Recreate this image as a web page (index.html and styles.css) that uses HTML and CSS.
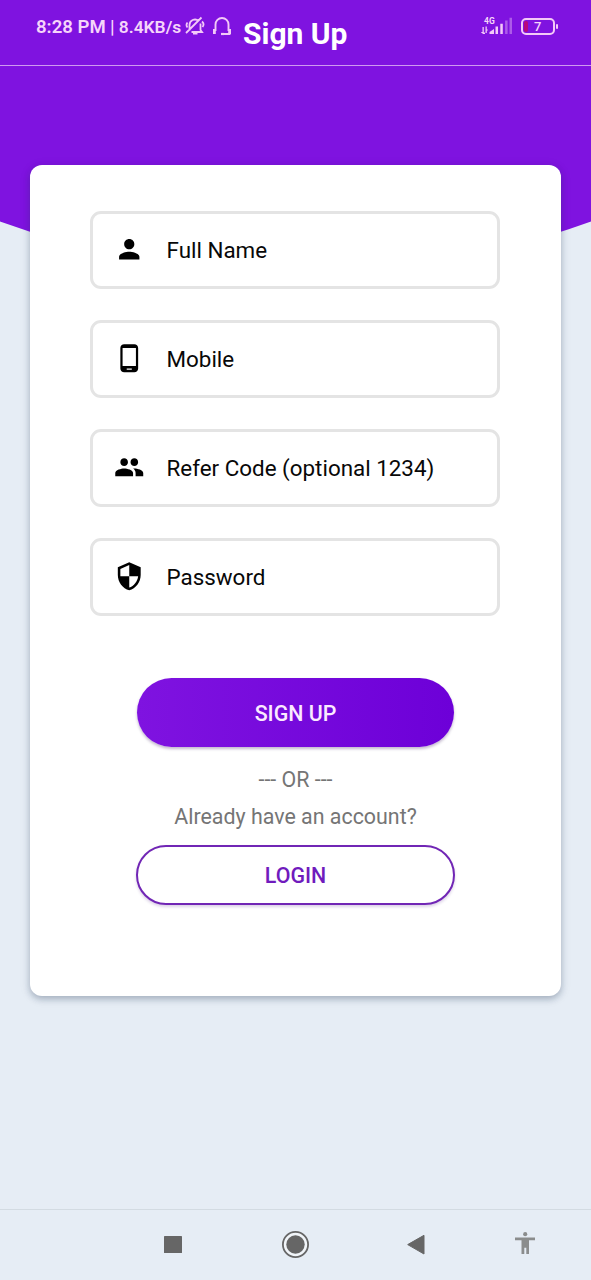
FILE: index.html
```html
<!DOCTYPE html>
<html lang="en">
<head>
<meta charset="utf-8">
<title>Sign Up</title>
<link rel="stylesheet" href="styles.css">
</head>
<body>
<div class="screen">
  <svg class="hero" viewBox="0 0 591 280" aria-hidden="true"><path d="M0 0H591V221.500Q295.500 328 0 221.500Z" fill="#7f13e0"/></svg>
  <header class="bar">
    <div class="time"><span>8:28 PM</span><span class="sep">|</span><span class="speed">8.4KB/s</span></div>
    <svg class="bell" viewBox="0 0 20 20" fill="none" stroke="#f3c9f7" stroke-width="1.800">
      <path d="M4.500 14.500V9a5.500 5.500 0 0 1 9-4.200M15.500 7.500V14l1.500 2H6.500M2.500 6.500Q.5 9 2.500 11.500M17 5.500Q19.800 8 17.500 11M1 17 16.500 1.500"/><path d="M8 17.500h4.500" stroke-width="2"/>
    </svg>
    <svg class="headset" viewBox="0 0 20 20" fill="none" stroke="#f3c9f7" stroke-width="1.900">
      <path d="M3.500 14V7.500a6.500 6.500 0 0 1 13 0V14M17.500 15.500V17H11"/><path d="M2.400 12v5M17.600 12v5" stroke-width="2.800"/><path d="M9 17h3" stroke-width="2.200"/>
    </svg>
    <h1 class="title">Sign Up</h1>
    <div class="signal">
      <span class="net">4G</span>
      <svg class="bars" viewBox="0 0 31 18" fill="#f3c9f7"><path d="M1.500 10h1.300v5.500H4V17H1.500zM.3 15h2v1H.3zM4.500 9.500h1.300v3h1v1h-1V16H4.500zM8.500 17v-2l4.500-3v5zM14.500 9.500H17V17h-2.500zM19.300 6.800h2.500V17h-2.500z"/><path d="M24.100 3.500h2.500V17h-2.500zM28.500 .8H31V17h-2.500z" opacity=".4"/></svg>
    </div>
    <div class="battery"><span class="level"></span>7</div>
    <span class="nub"></span>
  </header>
  <main class="card">
    <div class="fields">
      <label class="field"><svg class="icon" viewBox="0 0 24 24"><path d="M12 12c2.210 0 4-1.790 4-4s-1.790-4-4-4-4 1.790-4 4 1.790 4 4 4zm0 2c-2.670 0-8 1.340-8 4v2h16v-2c0-2.660-5.330-4-8-4z"/></svg><span>Full Name</span></label>
      <label class="field"><svg class="icon" viewBox="0 0 24 24"><path d="M16 1H8C6.340 1 5 2.340 5 4v16c0 1.660 1.340 3 3 3h8c1.660 0 3-1.340 3-3V4c0-1.660-1.340-3-3-3zm-2 20h-4v-1h4v1zm3.250-3H6.750V4h10.500v14z"/></svg><span>Mobile</span></label>
      <label class="field"><svg class="icon" viewBox="0 0 24 24"><path d="M16 11c1.660 0 2.990-1.340 2.990-3S17.660 5 16 5c-1.660 0-3 1.340-3 3s1.340 3 3 3zm-8 0c1.660 0 2.990-1.340 2.990-3S9.660 5 8 5C6.340 5 5 6.340 5 8s1.340 3 3 3zm0 2c-2.330 0-7 1.170-7 3.500V19h14v-2.500c0-2.330-4.670-3.500-7-3.500zm8 0c-.29 0-.62.02-.97.05 1.160.84 1.970 1.970 1.970 3.450V19h6v-2.500c0-2.330-4.670-3.500-7-3.500z"/></svg><span>Refer Code (optional 1234)</span></label>
      <label class="field"><svg class="icon" viewBox="0 0 24 24"><path d="M12 1 3 5v6c0 5.550 3.840 10.740 9 12 5.160-1.260 9-6.450 9-12V5l-9-4zm0 10.990h7c-.53 4.120-3.280 7.790-7 8.940V12H5V6.300l7-3.110v8.800z"/></svg><span>Password</span></label>
    </div>
    <button class="btn signup">SIGN UP</button>
    <p class="or">--- OR ---</p>
    <p class="have">Already have an account?</p>
    <button class="btn login">LOGIN</button>
  </main>
  <nav class="nav">
    <svg class="navicons" viewBox="0 0 591 70" fill="#666">
      <rect x="164" y="26" width="18" height="17" rx=".6"/>
      <circle cx="295.500" cy="34.500" r="12.600" fill="#f1f5f9" stroke="#666" stroke-width="1.800"/><circle cx="295.500" cy="34.500" r="9.200"/>
      <path d="M407.700 34.600 424 25.300V44z" stroke="#666" stroke-linejoin="round"/>
      <g fill="#8b8d8d"><circle cx="525.200" cy="24.200" r="2.100"/><path d="M515 27.500h20v2.700h-6V44h-2.700v-6.300h-2V44h-2.800V30.200H515z"/></g>
    </svg>
  </nav>
</div>
</body>
</html>
```

FILE: styles.css
```css
* { box-sizing: border-box; }
body { margin: 0; font-family: Roboto, "Liberation Sans", sans-serif; }
h1, p { margin: 0; }
.screen { position: relative; isolation: isolate; display: flex; flex-direction: column; width: 591px; height: 1280px; background: #e6edf5; overflow: hidden; }
.hero { position: absolute; z-index: -1; top: 0; left: 0; width: 591px; height: 280px; }
.bar { display: flex; align-items: flex-start; height: 66px; padding-left: 36px; border-bottom: 1px solid #cf9af0; color: #f6d5fa; }
.time { display: flex; width: 149px; margin-top: 16px; font-size: 18.6px; line-height: 22px; font-weight: 600; white-space: nowrap; }
.sep { width: 13px; text-align: center; font-weight: 500; }
.speed { font-size: 17.4px; }
.bell { width: 20px; height: 20px; margin-top: 16px; }
.headset { width: 20px; height: 20px; margin: 17px 0 0 7px; }
.title { width: 237px; margin: 16px 0 0 11px; font-size: 30px; line-height: 36px; font-weight: 700; color: #fff; white-space: nowrap; }
.signal { display: grid; width: 31px; height: 18px; margin: 17px 9px 0 1px; }
.net, .bars { grid-area: 1 / 1; }
.net { padding-left: 3px; font-size: 8.5px; line-height: 8px; font-weight: 700; }
.bars { width: 31px; height: 18px; }
.battery { display: flex; align-items: center; width: 34px; height: 17px; margin-top: 18px; padding-left: 1px; border: 2px solid #f3c9f7; border-radius: 5px; font-size: 13px; line-height: 13px; font-weight: 500; }
.level { width: 4px; height: 11px; margin-right: 6px; border-radius: 2px; background: #b9087b; }
.nub { width: 2px; height: 5px; margin: 24px 0 0 1px; border-radius: 1px; background: #f3c9f7; }
.card { display: flex; flex-direction: column; align-items: center; width: 531px; height: 831px; margin: 99px 0 0 30px; padding-top: 46px; border-radius: 12px; background: #fff; box-shadow: 0 3px 6px rgba(30, 50, 80, .27), 0 2px 12px rgba(30, 50, 80, .1); }
.fields { display: grid; gap: 31px; width: 410px; margin-right: 1px; }
.field { display: flex; align-items: center; gap: 22px; height: 78px; padding-left: 21px; border: 3px solid #e4e4e4; border-radius: 11px; font-size: 22.4px; line-height: 28px; color: #080808; white-space: nowrap; }
.icon { width: 30.5px; height: 30.5px; margin-bottom: 1px; fill: #000; }
.btn { display: flex; align-items: center; justify-content: center; padding: 0; font: 500 21.4px/24px Roboto, "Liberation Sans", sans-serif; }
.signup { width: 317px; height: 69px; margin-top: 62px; padding-top: 2px; border: 0; border-radius: 35px; background: linear-gradient(90deg, #7f13e0, #6d00d8); color: #fbeaff; box-shadow: 0 2px 3px rgba(40, 0, 80, .28); }
.or, .have { font-size: 21.4px; line-height: 26px; color: #757575; white-space: nowrap; }
.or { margin-top: 20px; }
.have { margin-top: 11px; }
.login { width: 319px; height: 60px; margin-top: 15px; padding-top: 2px; border: 1.5px solid #7126b5; border-width: 2px; border-radius: 31px; background: #fff; color: #701bbd; box-shadow: 0 2px 3px rgba(60, 0, 120, .18); }
.nav { height: 71px; margin-top: auto; border-top: 1px solid #d3dbe2; }
.navicons { display: block; width: 591px; height: 70px; }
```
